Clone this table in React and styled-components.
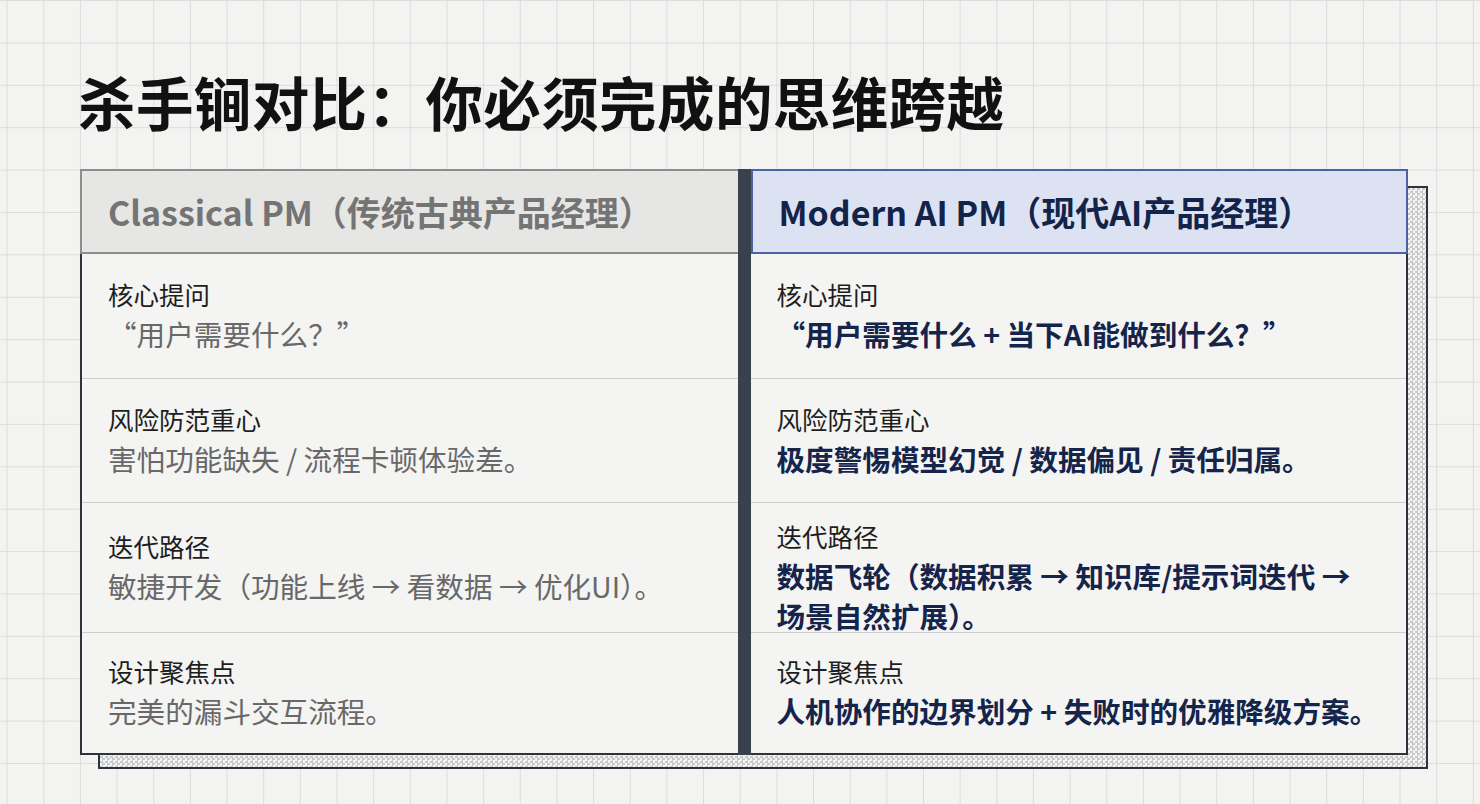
import React from 'react';
import styled, { createGlobalStyle } from 'styled-components';

const GlobalStyle = createGlobalStyle`
  html, body {
    margin: 0;
    padding: 0;
  }
  body {
    font-family: "Noto Sans CJK SC", "Noto Sans", sans-serif;
    background-color: #f3f3f2;
    background-image:
      linear-gradient(to right, #dcdcdc 1px, transparent 1px),
      linear-gradient(to bottom, #dcdcdc 1px, transparent 1px);
    background-size: 36.67px 42.4px;
    background-position: 6.6px 0px;
  }
`;

const Page = styled.div`
  width: 1480px;
  height: 804px;
  box-sizing: border-box;
  padding: 68px 0 0 80px;
`;

const Title = styled.h1`
  margin: 0 0 34px -2px;
  font-size: 57.5px;
  line-height: 67px;
  font-weight: 700;
  color: #111;
  letter-spacing: 0.4px;
`;

const Board = styled.div`
  position: relative;
  width: 1328px;

  /* hatched offset shadow behind the table */
  &::before {
    content: '';
    position: absolute;
    top: 17px;
    left: 18px;
    right: -20px;
    bottom: -14px;
    border: 2px solid #2c333b;
    background: repeating-conic-gradient(#c9c9c9 0 25%, #f4f4f4 0 50%) 0 0 / 5px 5px;
    z-index: 0;
  }
`;

const Table = styled.div`
  position: relative;
  z-index: 1;
  display: grid;
  grid-template-columns: 1fr 13px 1fr;
  grid-template-rows: 85px 124px 124px 130px 121px;
  background: #f4f4f3;
  border: 2px solid #2c333b;
  border-top: none;
  box-sizing: border-box;
`;

const Divider = styled.div`
  grid-column: 2;
  grid-row: 1 / -1;
  background: #39424c;
  margin-bottom: -2px;
`;

const Head = styled.div`
  grid-row: 1;
  grid-column: ${(p) => (p.$modern ? 3 : 1)};
  display: flex;
  align-items: center;
  box-sizing: border-box;
  padding-left: 26px;
  margin: ${(p) => (p.$modern ? '0 -2px 0 0' : '0 0 0 -2px')};
  background: ${(p) => (p.$modern ? '#dde2f3' : '#e6e6e5')};
  border: 2px solid ${(p) => (p.$modern ? '#4b63a3' : '#8d8d8d')};
  ${(p) => (p.$modern ? '' : 'border-right: none;')}
  font-size: 34px;
  font-weight: 700;
  color: ${(p) => (p.$modern ? '#13244a' : '#747474')};
`;

const Cell = styled.div`
  grid-column: ${(p) => (p.$modern ? 3 : 1)};
  display: flex;
  flex-direction: column;
  justify-content: center;
  padding: ${(p) => (p.$lift ? '20px' : '0')} 26px 0;
  border-top: ${(p) => (p.$first ? 'none' : '1px solid #cdcdcd')};
`;

const Label = styled.div`
  font-size: 25.5px;
  line-height: 32px;
  color: #1e1e1e;
  margin-bottom: 4px;
`;

const Value = styled.div`
  font-size: 28.6px;
  line-height: 40px;
  font-weight: ${(p) => (p.$modern ? 700 : 400)};
  color: ${(p) => (p.$modern ? '#15244a' : '#686868')};
  white-space: nowrap;
`;

const rows = [
  {
    label: '核心提问',
    classic: '“用户需要什么？”',
    modern: '“用户需要什么 + 当下AI能做到什么？”',
  },
  {
    label: '风险防范重心',
    classic: '害怕功能缺失 / 流程卡顿体验差。',
    modern: '极度警惕模型幻觉 / 数据偏见 / 责任归属。',
  },
  {
    label: '迭代路径',
    classic: '敏捷开发（功能上线 → 看数据 → 优化UI）。',
    modern: ['数据飞轮（数据积累 → 知识库/提示词迭代 →', '场景自然扩展）。'],
  },
  {
    label: '设计聚焦点',
    classic: '完美的漏斗交互流程。',
    modern: '人机协作的边界划分 + 失败时的优雅降级方案。',
  },
];

const App = () => (
  <>
    <GlobalStyle />
    <Page>
      <Title>杀手锏对比：你必须完成的思维跨越</Title>
      <Board>
        <Table>
          <Head>Classical PM（传统古典产品经理）</Head>
          <Divider />
          <Head $modern>Modern AI PM（现代AI产品经理）</Head>
          {rows.map((row, i) => {
            const multi = Array.isArray(row.modern);
            return (
              <React.Fragment key={row.label}>
                <Cell $first={i === 0} style={{ gridRow: i + 2 }}>
                  <Label>{row.label}</Label>
                  <Value>{row.classic}</Value>
                </Cell>
                <Cell $modern $lift={multi} $first={i === 0} style={{ gridRow: i + 2 }}>
                  <Label>{row.label}</Label>
                  <Value $modern>
                    {multi ? row.modern.map((line) => <div key={line}>{line}</div>) : row.modern}
                  </Value>
                </Cell>
              </React.Fragment>
            );
          })}
        </Table>
      </Board>
    </Page>
  </>
);

export default App;
